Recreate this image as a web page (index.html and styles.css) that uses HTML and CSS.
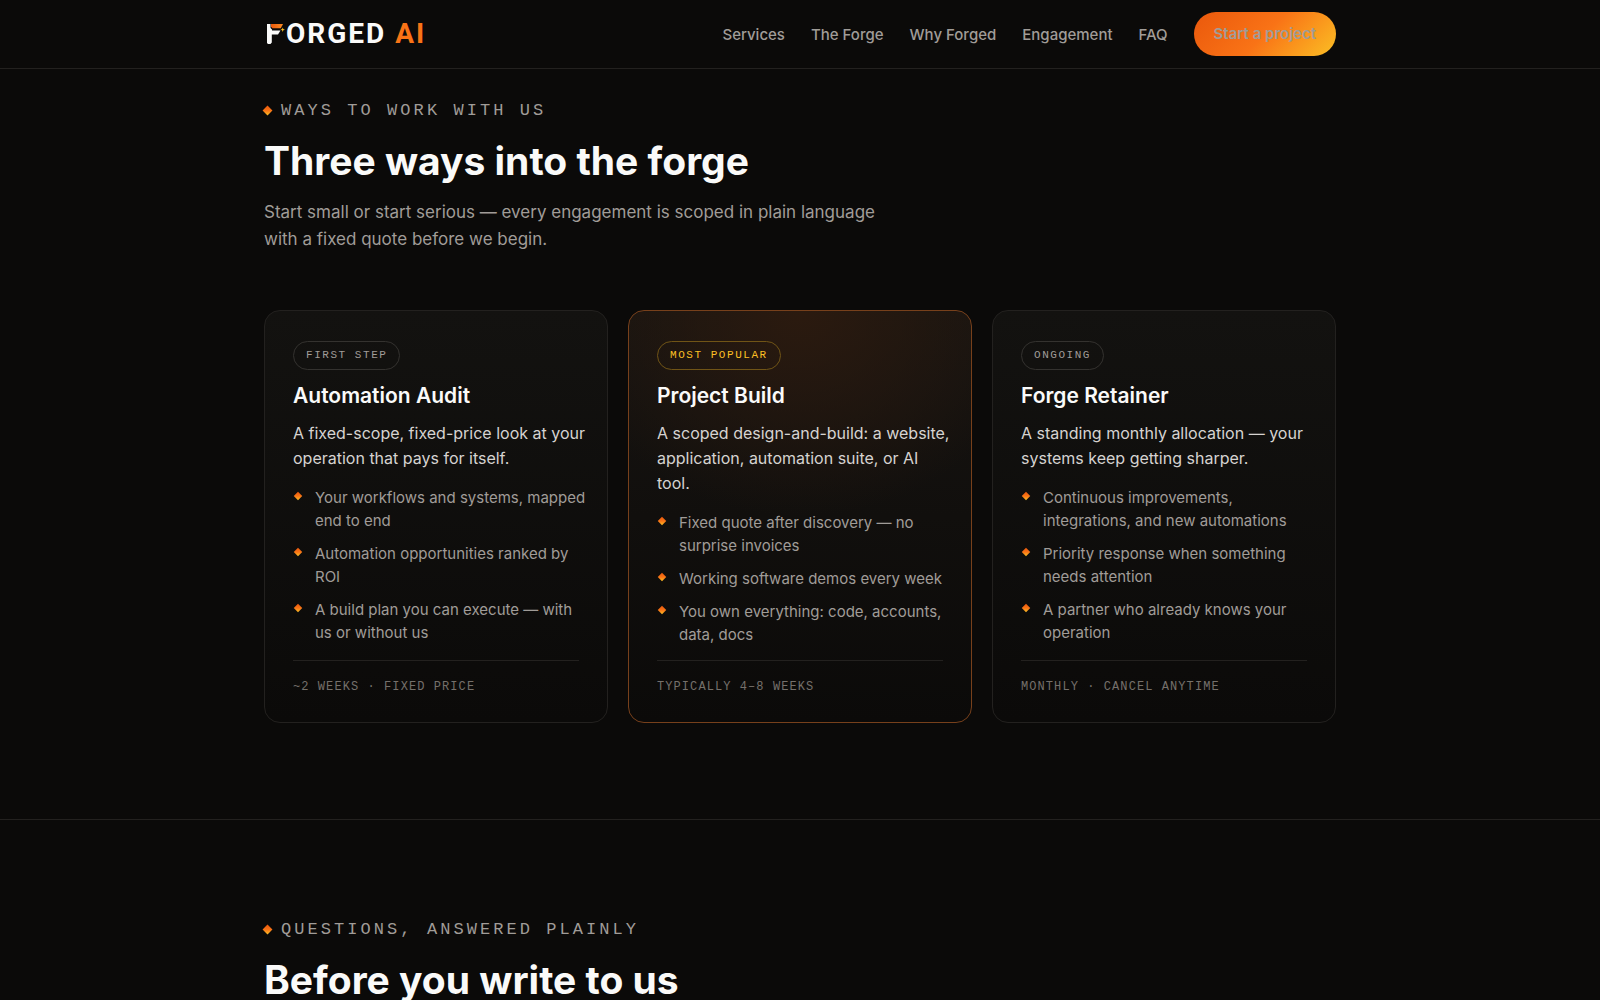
FILE: index.html
```html
<!DOCTYPE html>
<html lang="en">
<head>
<meta charset="utf-8">
<meta name="viewport" content="width=device-width, initial-scale=1">
<title>Forged AI</title>
<link rel="stylesheet" href="styles.css">
</head>
<body>
<header class="site-header">
  <div class="container header-row">
    <a class="logo" href="#" aria-label="Forged AI">
      <svg class="logo-mark" viewBox="0 0 20 22" aria-hidden="true">
        <defs>
          <linearGradient id="ember" x1="0" y1="0" x2="1" y2="0">
            <stop offset="0" stop-color="#ea580c"/>
            <stop offset="1" stop-color="#fb8c24"/>
          </linearGradient>
        </defs>
        <path fill="#fafaf9" d="M1 1H4.500V5L6 6.500V7.500H14.500L12 11.500H5.800V19.500L4.500 21H2L1 20z"/>
        <path fill="url(#ember)" d="M5 1H17L14.800 5.300H6.500L5 3.800z"/>
        <path fill="#fbbf24" d="M16.700 4.500L17.300 6.100 18.900 6.700 17.300 7.300 16.700 8.900 16.100 7.300 14.500 6.700 16.100 6.100z"/>
      </svg>
      <span class="logo-text">ORGED <span class="logo-accent">AI</span></span>
    </a>
    <nav class="nav" aria-label="Main">
      <a href="#services">Services</a>
      <a href="#forge">The Forge</a>
      <a href="#why">Why Forged</a>
      <a href="#engagement">Engagement</a>
      <a href="#faq">FAQ</a>
      <a class="nav-cta" href="#contact">Start a project</a>
    </nav>
  </div>
</header>

<main>
  <section class="section section-first" id="engagement">
    <div class="container">
      <p class="eyebrow">Ways to work with us</p>
      <h2 class="heading">Three ways into the forge</h2>
      <p class="lead">Start small or start serious — every engagement is scoped in plain language with a fixed quote before we begin.</p>

      <div class="cards">
        <article class="card">
          <span class="tag">First step</span>
          <h3 class="card-title">Automation Audit</h3>
          <p class="card-desc">A fixed-scope, fixed-price look at your operation that pays for itself.</p>
          <ul class="points">
            <li>Your workflows and systems, mapped end to end</li>
            <li>Automation opportunities ranked by ROI</li>
            <li>A build plan you can execute — with us or without us</li>
          </ul>
          <p class="card-meta">~2 weeks · Fixed price</p>
        </article>

        <article class="card card-featured">
          <span class="tag">Most popular</span>
          <h3 class="card-title">Project Build</h3>
          <p class="card-desc">A scoped design-and-build: a website, application, automation suite, or AI tool.</p>
          <ul class="points">
            <li>Fixed quote after discovery — no surprise invoices</li>
            <li>Working software demos every week</li>
            <li>You own everything: code, accounts, data, docs</li>
          </ul>
          <p class="card-meta">Typically 4–8 weeks</p>
        </article>

        <article class="card">
          <span class="tag">Ongoing</span>
          <h3 class="card-title">Forge Retainer</h3>
          <p class="card-desc">A standing monthly allocation — your systems keep getting sharper.</p>
          <ul class="points">
            <li>Continuous improvements, integrations, and new automations</li>
            <li>Priority response when something needs attention</li>
            <li>A partner who already knows your operation</li>
          </ul>
          <p class="card-meta">Monthly · Cancel anytime</p>
        </article>
      </div>
    </div>
  </section>

  <section class="section" id="faq">
    <div class="container">
      <p class="eyebrow">Questions, answered plainly</p>
      <h2 class="heading">Before you write to us</h2>
    </div>
  </section>
</main>
</body>
</html>
```
FILE: styles.css
```css
:root {
  --bg: #0b0a09;
  --line: #23211f;
  --text: #fafaf9;
  --soft: #d6d3d1;
  --muted: #a09c98;
  --dim: #75706b;
  --ember: linear-gradient(135deg, #ea580c, #f97316 50%, #fbbf24);
  --sans: Inter, "Liberation Sans", sans-serif;
  --mono: "Liberation Mono", monospace;
}

* { box-sizing: border-box; }

body {
  margin: 0;
  background: var(--bg);
  color: var(--text);
  font-family: var(--sans);
  font-size: 16px;
  line-height: 25px;
}

h2, h3, p, ul { margin: 0; }

.container {
  max-width: 1120px;
  margin: 0 auto;
  padding: 0 24px;
}

/* Header */
.site-header {
  position: sticky;
  top: 0;
  z-index: 1;
  background: var(--bg);
  border-bottom: 1px solid var(--line);
}

.header-row {
  display: flex;
  align-items: center;
  justify-content: space-between;
  gap: 24px;
  padding-top: 12px;
  padding-bottom: 12px;
}

.logo {
  display: flex;
  align-items: center;
  padding-left: 2px;
  color: var(--text);
  text-decoration: none;
}

.logo-mark { width: 20px; height: 22px; }

.logo-text {
  font: 700 28px/32px Roboto, var(--sans);
  letter-spacing: 2px;
}

.logo-accent { color: #f97316; }

.nav {
  display: flex;
  align-items: center;
  gap: 26px;
  font-size: 15px;
  font-weight: 500;
}

.nav a {
  color: var(--muted);
  text-decoration: none;
}

.nav .nav-cta {
  padding: 0 20px;
  border-radius: 22px;
  background: var(--ember);
  font-weight: 600;
  line-height: 44px;
}

/* Sections */
.section {
  padding: 96px 0;
  border-top: 1px solid var(--line);
}

.section-first {
  padding-top: 28px;
  border-top: 0;
}

.eyebrow {
  display: flex;
  align-items: center;
  gap: 10px;
  color: var(--muted);
  font: 17px/27px var(--mono);
  letter-spacing: 0.18em;
  text-transform: uppercase;
}

.eyebrow::before {
  content: "";
  width: 7px;
  height: 7px;
  background: var(--ember);
  transform: rotate(45deg);
}

.heading {
  margin-top: 14px;
  font-size: 39px;
  font-weight: 700;
  line-height: 46px;
}

.lead {
  max-width: 640px;
  margin-top: 15px;
  color: var(--muted);
  font-size: 17px;
  line-height: 27px;
}

/* Cards */
.cards {
  display: grid;
  grid-template-columns: repeat(3, 1fr);
  gap: 20px;
  margin-top: 57px;
}

.card {
  display: flex;
  flex-direction: column;
  align-items: flex-start;
  padding: 30px 28px 26px;
  border: 1px solid var(--line);
  border-radius: 16px;
  background: linear-gradient(#131210, #0b0a09);
}

.card-featured {
  border-color: #77401b;
  background:
    radial-gradient(ellipse 70% 50% at 50% 0, #2b1a0f, transparent),
    linear-gradient(#171411, #0b0a09);
}

.tag {
  padding: 0 12px;
  border: 1px solid #34322f;
  border-radius: 15px;
  color: var(--muted);
  font: 11px/27px var(--mono);
  letter-spacing: 0.14em;
  text-transform: uppercase;
}

.card-featured .tag {
  border-color: #705416;
  color: #fbbf24;
}

.card-title {
  margin-top: 12px;
  font-size: 21px;
  font-weight: 600;
  line-height: 27px;
}

/* Running text may reach slightly into the card's right padding. */
.card-desc,
.points {
  margin-right: -8px;
}

.card-desc {
  margin-top: 12px;
  color: var(--soft);
}

.points {
  display: grid;
  gap: 10px;
  margin-top: 15px;
  margin-bottom: 14px;
  padding: 0;
  color: var(--muted);
  font-size: 15px;
  line-height: 23px;
  list-style: none;
}

.points li {
  display: flex;
  gap: 14px;
  padding-left: 2px;
}

.points li::before {
  content: "";
  flex: none;
  width: 6px;
  height: 6px;
  margin-top: 7px;
  background: var(--ember);
  transform: rotate(45deg);
}

.card-meta {
  align-self: stretch;
  margin-top: auto;
  padding-top: 17px;
  border-top: 1px solid var(--line);
  color: var(--dim);
  font: 12px/18px var(--mono);
  letter-spacing: 0.09em;
  text-transform: uppercase;
}

@media (max-width: 960px) {
  .cards { grid-template-columns: 1fr; }
  .header-row, .nav { flex-wrap: wrap; }
}
```
